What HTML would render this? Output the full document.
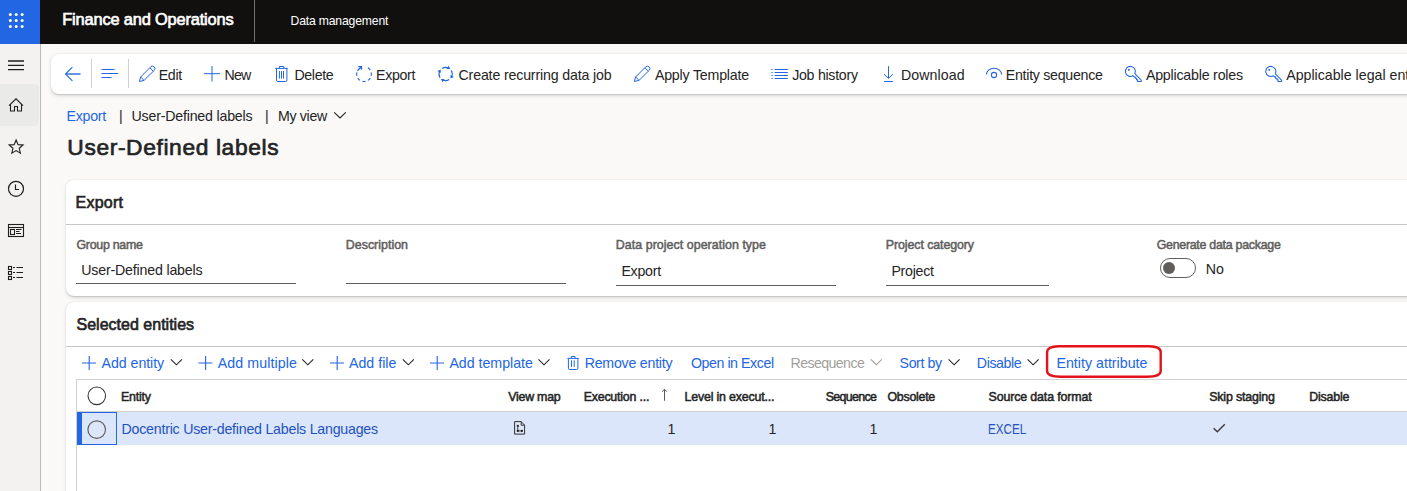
<!DOCTYPE html>
<html><head><meta charset="utf-8">
<style>
*{box-sizing:border-box}
html,body{margin:0;padding:0;background:#faf9f8}
body{width:1407px;height:491px;overflow:hidden;position:relative;background:#faf9f8;font-family:"Liberation Sans",sans-serif}
.a{position:absolute}
.t{position:absolute;white-space:nowrap;font-family:"Liberation Sans",sans-serif}
svg{position:absolute;overflow:visible}
</style></head><body>
<!-- top bar -->
<div class="a" style="left:0;top:0;width:1407px;height:44px;background:#11100f"></div>
<div class="a" style="left:0;top:0;width:40px;height:44px;background:#2266e3"></div>
<svg style="left:0;top:0" width="40" height="43">
 <g fill="#fff">
  <circle cx="10.3" cy="14.5" r="1.5"/><circle cx="16.2" cy="14.5" r="1.5"/><circle cx="22.1" cy="14.5" r="1.5"/>
  <circle cx="10.3" cy="20.4" r="1.5"/><circle cx="16.2" cy="20.4" r="1.5"/><circle cx="22.1" cy="20.4" r="1.5"/>
  <circle cx="10.3" cy="26.4" r="1.5"/><circle cx="16.2" cy="26.4" r="1.5"/><circle cx="22.1" cy="26.4" r="1.5"/>
 </g>
</svg>
<div class="a" style="left:254px;top:0;width:1px;height:42px;background:#717070"></div>

<!-- left nav -->
<div class="a" style="left:0;top:44px;width:40px;height:447px;background:#f3f2f1"></div>
<div class="a" style="left:40px;top:44px;width:1px;height:447px;background:#bdbbb9"></div>
<div class="a" style="left:0;top:84px;width:39px;height:42px;background:#eaeae9;border-radius:0 4px 4px 0"></div>
<svg style="left:0;top:43px" width="40" height="448">
 <g stroke="#201f1e" stroke-width="1.2" fill="none">
  <path d="M8 18H24M8 22.3H24M8 26.6H24" stroke-width="1.3"/>
 </g>
</svg>
<svg style="left:0;top:0" width="40" height="300">
 <g stroke="#201f1e" stroke-width="1.2" fill="none" stroke-linejoin="miter">
  <!-- home -->
  <path d="M9 105.6 L16 98.9 L23 105.6" stroke-width="1.15"/><path d="M10.5 104.3 V111 H14.5 V106.5 H17.5 V111 H21.5 V104.3" stroke-width="1.1"/>
  <!-- star -->
  <path d="M16.10 140.00 L18.04 144.63 L23.04 145.04 L19.24 148.32 L20.39 153.21 L16.10 150.60 L11.81 153.21 L12.96 148.32 L9.16 145.04 L14.16 144.63 Z" stroke-width="1.1"/>
  <!-- clock -->
  <circle cx="16" cy="188.8" r="7.5"/>
  <path d="M15.5 184.5 V189.5 H19"/>
  <!-- workspace -->
  <rect x="8.5" y="224.5" width="15" height="12" stroke-width="1.1"/>
  <path d="M8.5 227.5 H23.5" stroke-width="1.1"/>
  <rect x="10.5" y="229.5" width="4" height="5" stroke-width="1.1"/>
  <path d="M16 229.5 H21.5 M16 231.5 H19.5 M16 233.5 H21" stroke-width="1"/>
  <!-- list -->
  <rect x="8.5" y="266.5" width="3" height="3" stroke-width="1.1"/>
  <rect x="8.5" y="271.5" width="3" height="3" stroke-width="1.1"/>
  <rect x="8.5" y="276.5" width="3" height="3" stroke-width="1.1"/>
  <path d="M13 267.5 H15 M16.5 267.5 H23 M13 272.5 H15 M16.5 272.5 H23 M13 277.5 H15 M16.5 277.5 H23" stroke-width="1"/>
 </g>
</svg>

<!-- toolbar card -->
<div class="a" style="left:51px;top:54px;width:1400px;height:40px;background:#fff;border-radius:8px;box-shadow:0 1.6px 3.6px rgba(0,0,0,.13),0 .3px .9px rgba(0,0,0,.11)"></div>
<div class="a" style="left:91px;top:59px;width:1px;height:29px;background:#d2d0ce"></div>
<div class="a" style="left:128px;top:59px;width:1px;height:29px;background:#d2d0ce"></div>
<svg style="left:0;top:0" width="1407" height="100">
 <g stroke="#2266e3" stroke-width="1" fill="none" stroke-linecap="butt" stroke-linejoin="miter">
  <!-- back -->
  <path d="M66 74 H80.5" stroke-width="1.4"/>
  <path d="M72.4 67.1 L65.5 74 L72.4 80.9" stroke-width="1.1"/>
  <!-- lines -->
  <path d="M101.5 69.5 H114.5 M101.5 73.5 H118 M101.5 77.5 H111.5" stroke-width="1.1"/>
  <!-- pencil edit -->
  <path d="M139.4 81.5 L140.6 77 L150.9 66.7 A2.5 2.5 0 0 1 154.4 70.2 L144.1 80.3 Z M149.9 67.8 L153.3 71.2 M140.7 77 L143.9 80.2" stroke-linejoin="round"/>
  <!-- new plus -->
  <path d="M212 66 V81.5 M204 73.7 H220"/>
  <!-- delete -->
  <path d="M275.2 68.4 H287.8 M279.5 68.4 V66.5 H283.8 V68.4 M276.5 68.4 V80.2 Q276.5 81.5 277.8 81.5 H285.6 Q286.9 81.5 286.9 80.2 V68.4 M279.4 71 V78.6 M281.5 71 V78.6 M283.5 71 V78.6"/>
  <!-- export dashed circle -->
  <path d="M371.21 72.44 A7.40 7.40 0 0 1 371.21 75.76 M370.28 78.02 A7.40 7.40 0 0 1 367.92 80.38 M365.66 81.31 A7.40 7.40 0 0 1 362.34 81.31 M360.08 80.38 A7.40 7.40 0 0 1 357.72 78.02 M356.79 75.76 A7.40 7.40 0 0 1 356.79 72.44 M367.92 67.82 A7.40 7.40 0 0 1 370.28 70.18" stroke-width="1.1"/>
  <path d="M357.4 70.7 L361.5 66.6 M358.3 66.6 H361.5 V69.8" stroke-width="1.3"/>
  <!-- recurring -->
  <path d="M442.01 68.46 A6.60 6.60 0 0 1 448.39 68.02 M451.14 70.41 A6.60 6.60 0 0 1 451.58 76.79 M449.19 79.54 A6.60 6.60 0 0 1 442.81 79.98 M440.06 77.59 A6.60 6.60 0 0 1 439.62 71.21" stroke-width="1.1"/>
  <path d="M450.20 69.12 L448.67 65.74 L446.50 69.10 Z M450.48 78.60 L453.86 77.07 L450.50 74.90 Z M441.00 78.88 L442.53 82.26 L444.70 78.90 Z M440.72 69.40 L437.34 70.93 L440.70 73.10 Z" fill="#2266e3" stroke="none"/>
  <!-- apply template pencil -->
  <path d="M634.4 81.5 L635.6 77 L645.9 66.7 A2.5 2.5 0 0 1 649.4 70.2 L639.1 80.3 Z M644.9 67.8 L648.3 71.2 M635.7 77 L638.9 80.2" stroke-linejoin="round"/>
  <!-- job history -->
  <path d="M774.6 69.5 H787.8 M774.6 72.5 H787.8 M774.6 75.5 H787.8 M774.6 78.5 H787.8" stroke-width="1.1"/>
  <path d="M771.2 69.5 H773 M771.2 72.5 H773 M771.2 75.5 H773 M771.2 78.5 H773" stroke-width="1" opacity="0.7"/>
  <!-- download -->
  <path d="M888.5 66.2 V78.1 M884.1 74.2 L888.5 78.4 L892.9 74.2 M884.1 81.5 H892.9"/>
  <!-- eye -->
  <path d="M986.4 74.5 A7.6 6.2 0 0 1 1001.6 74.5" stroke-width="1.1"/>
  <circle cx="994" cy="75" r="2.6" stroke-width="1.1"/>
  <!-- key -->
  <path d="M1134.85 73.67 A5 5 0 1 0 1132.90 75.73 L1134.20 77 L1135.10 76.9 L1135.30 78.3 L1136.40 78.3 L1136.60 79.7 L1137.60 79.8 V81.4 H1141.20 V80.1 Z" stroke-width="1.05" stroke-linejoin="miter"/>
  <rect x="1128.00" y="69.0" width="1.7" height="1.7" fill="#2266e3" stroke="none"/>
  <path d="M1275.25 73.67 A5 5 0 1 0 1273.30 75.73 L1274.60 77 L1275.50 76.9 L1275.70 78.3 L1276.80 78.3 L1277.00 79.7 L1278.00 79.8 V81.4 H1281.60 V80.1 Z" stroke-width="1.05" stroke-linejoin="miter"/>
  <rect x="1268.40" y="69.0" width="1.7" height="1.7" fill="#2266e3" stroke="none"/>
 </g>
</svg>

<!-- breadcrumb chevron -->
<svg style="left:0;top:0" width="400" height="130">
 <path d="M334.2 112.3 L340 118 L345.8 112.3" stroke="#242424" stroke-width="1.1" fill="none"/>
</svg>

<!-- card 1 -->
<div class="a" style="left:66px;top:180px;width:1400px;height:116px;background:#fff;border-radius:8px;box-shadow:0 1.6px 3.6px rgba(0,0,0,.13),0 .3px .9px rgba(0,0,0,.11)"></div>
<div class="a" style="left:66px;top:224px;width:1350px;height:1px;background:#c8c6c4"></div>
<div class="a" style="left:76px;top:283px;width:220px;height:1px;background:#605e5c"></div>
<div class="a" style="left:346px;top:283px;width:220px;height:1px;background:#605e5c"></div>
<div class="a" style="left:616px;top:285px;width:220px;height:1px;background:#605e5c"></div>
<div class="a" style="left:886px;top:285px;width:163px;height:1px;background:#605e5c"></div>
<div class="a" style="left:1160px;top:258px;width:36px;height:20px;border:1px solid #605e5c;border-radius:10px;background:#fff"></div>
<div class="a" style="left:1163px;top:262px;width:12px;height:12px;border-radius:6px;background:#605e5c"></div>

<!-- card 2 -->
<div class="a" style="left:66px;top:302px;width:1400px;height:250px;background:#fff;border-radius:8px;box-shadow:0 1.6px 3.6px rgba(0,0,0,.13),0 .3px .9px rgba(0,0,0,.11)"></div>
<div class="a" style="left:66px;top:346px;width:1350px;height:1px;background:#c8c6c4"></div>
<!-- grid -->
<div class="a" style="left:76px;top:379px;width:1340px;height:1px;background:#d2d0ce"></div>
<div class="a" style="left:76px;top:379px;width:1px;height:120px;background:#d2d0ce"></div>
<div class="a" style="left:77px;top:411px;width:1340px;height:1px;background:#d2d0ce"></div>
<div class="a" style="left:77px;top:412px;width:1340px;height:33px;background:#dce6fa"></div>
<div class="a" style="left:77px;top:412px;width:4px;height:33px;background:#2266e3"></div>
<div class="a" style="left:81px;top:412px;width:36px;height:33px;border:1px solid #2266e3"></div>
<svg style="left:0;top:0" width="1407" height="491">
 <g fill="none" stroke-width="1.2">
  <circle cx="96.8" cy="395.8" r="8.8" stroke="#3b3a39" stroke-width="1.1"/>
  <circle cx="96.7" cy="429.6" r="8.8" stroke="#605e5c"/>
 </g>
 <g stroke="#2266e3" stroke-width="1.1" fill="none" stroke-linecap="butt">
  <path d="M89.2 356 V370 M82.0 363 H96.0 M205.6 356 V370 M198.4 363 H212.4 M337.2 356 V370 M330.0 363 H344.0 M437.2 356 V370 M430.0 363 H444.0 "/>
  <path d="M567.4 358.4 H578.6 M571.3 358.4 V356.5 H575 V358.4 M568.4 358.4 V368.2 Q568.4 369.5 569.7 369.5 H576.6 Q577.9 369.5 577.9 368.2 V358.4 M571.5 360.3 V366.9 M574.2 360.3 V366.9" stroke-width="1"/>
 </g>
 <path d="M170.9 359.3 L176.4 364.8 L181.9 359.3 M302.3 359.3 L307.8 364.8 L313.3 359.3 M402.8 359.3 L408.3 364.8 L413.8 359.3 M538.5 359.3 L544.0 364.8 L549.5 359.3 M948.6 359.3 L954.1 364.8 L959.6 359.3 M1027.6 359.3 L1033.1 364.8 L1038.6 359.3 " stroke="#242424" stroke-width="1.1" fill="none"/>
 <path d="M870.8 359.3 L876.3 364.8 L881.8 359.3" stroke="#a19f9d" stroke-width="1.1" fill="none"/>
 <!-- sort arrow -->
 <path d="M664.5 389.4 V400.8 M662.2 391.6 L664.5 389.3 L666.8 391.6" stroke="#5c5a58" stroke-width="1" fill="none"/>
 <!-- view map icon -->
 <path d="M514.6 421.6 H521.2 L524.6 425.2 V434.1 H514.6 Z M521.2 421.6 V425.2 H524.6" stroke="#323130" stroke-width="1" fill="none"/>
 <path d="M517.8 425.8 V430.9 H521.9" stroke="#323130" stroke-width="0.9" fill="none"/>
 <circle cx="517.8" cy="425.8" r="1.1" fill="#201f1e"/><circle cx="517.8" cy="430.9" r="1.1" fill="#201f1e"/><circle cx="521.9" cy="430.9" r="1.1" fill="#201f1e"/>
 <!-- checkmark -->
 <path d="M1213.6 428.2 L1217.3 431.8 L1224.8 424.3" stroke="#3b3a39" stroke-width="1.4" fill="none"/>
 <!-- red annotation -->
 <path d="M1058.5 346.3 H1149 Q1160.7 346.6 1160.7 352 V371 Q1160.7 376.6 1147 376.8 H1061 Q1047.1 376.6 1047.1 371 V352 Q1047.1 346.6 1058.5 346.3 Z" stroke="#e3121b" stroke-width="2.4" fill="none"/>
</svg>
<div class="t" style="left:62.23px;top:11.00px;font-size:16.40px;line-height:16.40px;font-weight:400;color:#ffffff;letter-spacing:-0.167px;-webkit-text-stroke:0.66px #ffffff">Finance and Operations</div>
<div class="t" style="left:290.50px;top:14.80px;font-size:12.20px;line-height:12.20px;font-weight:400;color:#ffffff;letter-spacing:-0.170px">Data management</div>
<div class="t" style="left:158.70px;top:68.00px;font-size:14.20px;line-height:14.20px;font-weight:400;color:#242424;letter-spacing:-0.302px">Edit</div>
<div class="t" style="left:224.40px;top:68.00px;font-size:14.20px;line-height:14.20px;font-weight:400;color:#242424;letter-spacing:-0.718px">New</div>
<div class="t" style="left:294.50px;top:68.00px;font-size:14.20px;line-height:14.20px;font-weight:400;color:#242424;letter-spacing:-0.384px">Delete</div>
<div class="t" style="left:376.00px;top:68.00px;font-size:14.20px;line-height:14.20px;font-weight:400;color:#242424;letter-spacing:-0.312px">Export</div>
<div class="t" style="left:458.50px;top:68.00px;font-size:14.20px;line-height:14.20px;font-weight:400;color:#242424;letter-spacing:-0.160px">Create recurring data job</div>
<div class="t" style="left:654.90px;top:68.00px;font-size:14.20px;line-height:14.20px;font-weight:400;color:#242424;letter-spacing:-0.193px">Apply Template</div>
<div class="t" style="left:792.20px;top:68.00px;font-size:14.20px;line-height:14.20px;font-weight:400;color:#242424;letter-spacing:-0.281px">Job history</div>
<div class="t" style="left:901.00px;top:68.00px;font-size:14.20px;line-height:14.20px;font-weight:400;color:#242424;letter-spacing:0.071px">Download</div>
<div class="t" style="left:1005.80px;top:68.00px;font-size:14.20px;line-height:14.20px;font-weight:400;color:#242424;letter-spacing:-0.276px">Entity sequence</div>
<div class="t" style="left:1145.90px;top:68.00px;font-size:14.20px;line-height:14.20px;font-weight:400;color:#242424;letter-spacing:-0.198px">Applicable roles</div>
<div class="t" style="left:1286.20px;top:68.00px;font-size:14.20px;line-height:14.20px;font-weight:400;color:#242424;letter-spacing:0.000px">Applicable legal entities</div>
<div class="t" style="left:66.50px;top:109.30px;font-size:14.20px;line-height:14.20px;font-weight:400;color:#2266e3;letter-spacing:-0.252px">Export</div>
<div class="t" style="left:119.00px;top:109.30px;font-size:14.20px;line-height:14.20px;font-weight:400;color:#242424;letter-spacing:0.000px">|</div>
<div class="t" style="left:131.50px;top:109.30px;font-size:14.20px;line-height:14.20px;font-weight:400;color:#242424;letter-spacing:-0.194px">User-Defined labels</div>
<div class="t" style="left:265.00px;top:109.30px;font-size:14.20px;line-height:14.20px;font-weight:400;color:#242424;letter-spacing:0.000px">|</div>
<div class="t" style="left:278.00px;top:109.30px;font-size:14.20px;line-height:14.20px;font-weight:400;color:#242424;letter-spacing:-0.332px">My view</div>
<div class="t" style="left:67.34px;top:136.20px;font-size:22.80px;line-height:22.80px;font-weight:400;color:#242424;letter-spacing:0.612px;-webkit-text-stroke:0.68px #242424">User-Defined labels</div>
<div class="t" style="left:75.52px;top:195.40px;font-size:16.00px;line-height:16.00px;font-weight:400;color:#242424;letter-spacing:0.253px;-webkit-text-stroke:0.64px #242424">Export</div>
<div class="t" style="left:76.45px;top:238.80px;font-size:12.40px;line-height:12.40px;font-weight:400;color:#605e5c;letter-spacing:-0.275px;-webkit-text-stroke:0.50px #605e5c">Group name</div>
<div class="t" style="left:345.85px;top:238.80px;font-size:12.40px;line-height:12.40px;font-weight:400;color:#605e5c;letter-spacing:0.012px;-webkit-text-stroke:0.50px #605e5c">Description</div>
<div class="t" style="left:615.85px;top:238.80px;font-size:12.40px;line-height:12.40px;font-weight:400;color:#605e5c;letter-spacing:0.051px;-webkit-text-stroke:0.50px #605e5c">Data project operation type</div>
<div class="t" style="left:885.85px;top:238.80px;font-size:12.40px;line-height:12.40px;font-weight:400;color:#605e5c;letter-spacing:-0.089px;-webkit-text-stroke:0.50px #605e5c">Project category</div>
<div class="t" style="left:1156.65px;top:238.80px;font-size:12.40px;line-height:12.40px;font-weight:400;color:#605e5c;letter-spacing:-0.266px;-webkit-text-stroke:0.50px #605e5c">Generate data package</div>
<div class="t" style="left:81.30px;top:263.40px;font-size:14.20px;line-height:14.20px;font-weight:400;color:#242424;letter-spacing:-0.183px">User-Defined labels</div>
<div class="t" style="left:621.40px;top:263.80px;font-size:14.20px;line-height:14.20px;font-weight:400;color:#242424;letter-spacing:-0.252px">Export</div>
<div class="t" style="left:891.40px;top:263.80px;font-size:14.20px;line-height:14.20px;font-weight:400;color:#242424;letter-spacing:-0.269px">Project</div>
<div class="t" style="left:1205.70px;top:261.50px;font-size:14.20px;line-height:14.20px;font-weight:400;color:#242424;letter-spacing:0.054px">No</div>
<div class="t" style="left:76.52px;top:316.90px;font-size:16.00px;line-height:16.00px;font-weight:400;color:#242424;letter-spacing:0.010px;-webkit-text-stroke:0.64px #242424">Selected entities</div>
<div class="t" style="left:101.60px;top:355.70px;font-size:14.20px;line-height:14.20px;font-weight:400;color:#2266e3;letter-spacing:-0.056px">Add entity</div>
<div class="t" style="left:217.70px;top:355.70px;font-size:14.20px;line-height:14.20px;font-weight:400;color:#2266e3;letter-spacing:0.102px">Add multiple</div>
<div class="t" style="left:349.00px;top:355.70px;font-size:14.20px;line-height:14.20px;font-weight:400;color:#2266e3;letter-spacing:0.010px">Add file</div>
<div class="t" style="left:449.40px;top:355.70px;font-size:14.20px;line-height:14.20px;font-weight:400;color:#2266e3;letter-spacing:-0.010px">Add template</div>
<div class="t" style="left:584.70px;top:355.70px;font-size:14.20px;line-height:14.20px;font-weight:400;color:#2266e3;letter-spacing:-0.232px">Remove entity</div>
<div class="t" style="left:690.90px;top:355.70px;font-size:14.20px;line-height:14.20px;font-weight:400;color:#2266e3;letter-spacing:-0.431px">Open in Excel</div>
<div class="t" style="left:790.50px;top:355.70px;font-size:14.20px;line-height:14.20px;font-weight:400;color:#a19f9d;letter-spacing:-0.597px">Resequence</div>
<div class="t" style="left:899.60px;top:355.70px;font-size:14.20px;line-height:14.20px;font-weight:400;color:#2266e3;letter-spacing:-0.425px">Sort by</div>
<div class="t" style="left:976.80px;top:355.70px;font-size:14.20px;line-height:14.20px;font-weight:400;color:#2266e3;letter-spacing:-0.404px">Disable</div>
<div class="t" style="left:1056.40px;top:355.70px;font-size:14.20px;line-height:14.20px;font-weight:400;color:#2266e3;letter-spacing:0.027px">Entity attribute</div>
<div class="t" style="left:121.05px;top:391.10px;font-size:12.40px;line-height:12.40px;font-weight:400;color:#242424;letter-spacing:-0.218px;-webkit-text-stroke:0.50px #242424">Entity</div>
<div class="t" style="left:508.15px;top:391.10px;font-size:12.40px;line-height:12.40px;font-weight:400;color:#242424;letter-spacing:-0.226px;-webkit-text-stroke:0.50px #242424">View map</div>
<div class="t" style="left:583.65px;top:391.10px;font-size:12.40px;line-height:12.40px;font-weight:400;color:#242424;letter-spacing:-0.203px;-webkit-text-stroke:0.50px #242424">Execution ...</div>
<div class="t" style="left:684.55px;top:391.10px;font-size:12.40px;line-height:12.40px;font-weight:400;color:#242424;letter-spacing:-0.179px;-webkit-text-stroke:0.50px #242424">Level in execut...</div>
<div class="t" style="left:825.75px;top:391.10px;font-size:12.40px;line-height:12.40px;font-weight:400;color:#242424;letter-spacing:-0.673px;-webkit-text-stroke:0.50px #242424">Sequence</div>
<div class="t" style="left:887.45px;top:391.10px;font-size:12.40px;line-height:12.40px;font-weight:400;color:#242424;letter-spacing:-0.257px;-webkit-text-stroke:0.50px #242424">Obsolete</div>
<div class="t" style="left:988.55px;top:391.10px;font-size:12.40px;line-height:12.40px;font-weight:400;color:#242424;letter-spacing:-0.131px;-webkit-text-stroke:0.50px #242424">Source data format</div>
<div class="t" style="left:1209.15px;top:391.10px;font-size:12.40px;line-height:12.40px;font-weight:400;color:#242424;letter-spacing:-0.155px;-webkit-text-stroke:0.50px #242424">Skip staging</div>
<div class="t" style="left:1309.25px;top:391.10px;font-size:12.40px;line-height:12.40px;font-weight:400;color:#242424;letter-spacing:-0.188px;-webkit-text-stroke:0.50px #242424">Disable</div>
<div class="t" style="left:121.50px;top:421.90px;font-size:14.20px;line-height:14.20px;font-weight:400;color:#1f52bd;letter-spacing:-0.221px">Docentric User-defined Labels Languages</div>
<div class="t" style="left:667.50px;top:421.90px;font-size:14.20px;line-height:14.20px;font-weight:400;color:#242424;letter-spacing:0.000px">1</div>
<div class="t" style="left:768.50px;top:421.90px;font-size:14.20px;line-height:14.20px;font-weight:400;color:#242424;letter-spacing:0.000px">1</div>
<div class="t" style="left:869.50px;top:421.90px;font-size:14.20px;line-height:14.20px;font-weight:400;color:#242424;letter-spacing:0.000px">1</div>
<div class="t" style="left:988.18px;top:421.90px;font-size:14.20px;line-height:14.20px;font-weight:400;color:#1f52bd;letter-spacing:0.000px;transform:scaleX(0.8217);transform-origin:0 0">EXCEL</div>
</body></html>
